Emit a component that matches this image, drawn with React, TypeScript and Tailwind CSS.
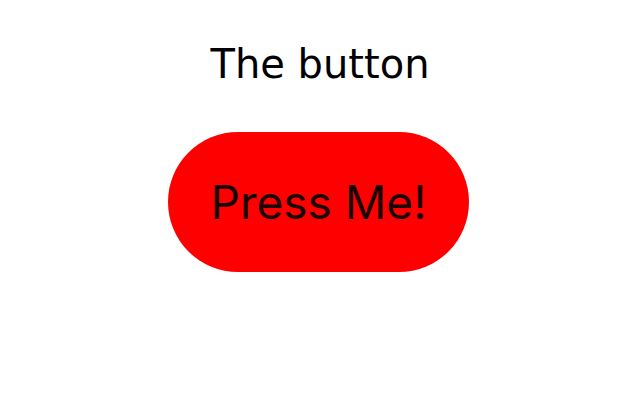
const App = () => {
  return (
    <div className="flex h-[400px] w-[640px] flex-col items-center bg-white pt-[36px]">
      <h1 className="font-['DejaVu_Sans',sans-serif] text-[40px] leading-[56px] text-black">
        The button
      </h1>
      <button className="mt-[40px] mr-[3px] flex h-[140px] w-[301px] items-center justify-center rounded-full bg-[#ff0000] font-['Inter',sans-serif] text-[46px] text-[#1a0000]">
        Press Me!
      </button>
    </div>
  );
};

export default App;
